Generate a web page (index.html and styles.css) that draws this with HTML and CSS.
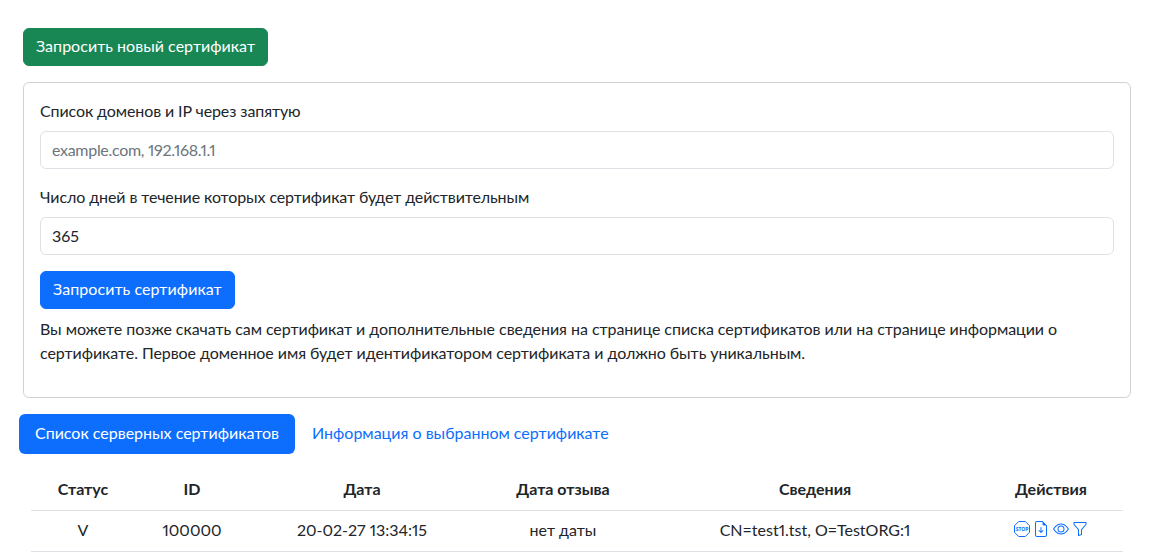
FILE: index.html
```html
<!DOCTYPE html>
<html lang="ru">
<head>
<meta charset="utf-8">
<title>Сертификаты</title>
<link rel="stylesheet" href="styles.css">
</head>
<body>
<main class="page">
  <section class="request">
    <button class="btn btn-green" type="button">Запросить новый сертификат</button>
    <form class="card">
      <label class="label" for="domains">Список доменов и IP через запятую</label>
      <input class="input" id="domains" type="text" placeholder="example.com, 192.168.1.1">
      <label class="label" for="days">Число дней в течение которых сертификат будет действительным</label>
      <input class="input" id="days" type="text" value="365">
      <button class="btn btn-blue" type="button">Запросить сертификат</button>
      <p class="hint">Вы можете позже скачать сам сертификат и дополнительные сведения на странице списка сертификатов или на странице информации о сертификате. Первое доменное имя будет идентификатором сертификата и должно быть уникальным.</p>
    </form>
  </section>
  <nav class="pills">
    <a class="pill active" href="#">Список серверных сертификатов</a>
    <a class="pill" href="#">Информация о выбранном сертификате</a>
  </nav>
  <table class="table">
    <colgroup>
      <col class="c1"><col class="c2"><col class="c3"><col class="c4"><col class="c5"><col class="c6">
    </colgroup>
    <thead>
      <tr><th>Статус</th><th>ID</th><th>Дата</th><th>Дата отзыва</th><th>Сведения</th><th>Действия</th></tr>
    </thead>
    <tbody>
      <tr>
        <td>V</td>
        <td>100000</td>
        <td>20-02-27 13:34:15</td>
        <td>нет даты</td>
        <td>CN=test1.tst, O=TestORG:1</td>
        <td>
          <span class="actions">
            <svg class="icon" viewBox="0 0 16 16" fill="currentColor"><path d="M4.7 0.5h6.6l4.2 4.2v6.6l-4.2 4.2H4.7L0.5 11.3V4.7z" fill="none" stroke="currentColor"/><text class="stop" x="8" y="9.9" text-anchor="middle">STOP</text></svg>
            <svg class="icon" viewBox="0 0 16 16" fill="currentColor"><path d="M8.5 6.5a.5.5 0 0 0-1 0v3.793L6.354 9.146a.5.5 0 1 0-.708.708l2 2a.5.5 0 0 0 .708 0l2-2a.5.5 0 0 0-.708-.708L8.5 10.293V6.5z"/><path d="M14 14V4.5L9.5 0H4a2 2 0 0 0-2 2v12a2 2 0 0 0 2 2h8a2 2 0 0 0 2-2zM9.5 3A1.5 1.5 0 0 0 11 4.5h2V14a1 1 0 0 1-1 1H4a1 1 0 0 1-1-1V2a1 1 0 0 1 1-1h5.5v2z"/></svg>
            <svg class="icon" viewBox="0 0 16 16" fill="currentColor"><path d="M16 8s-3-5.5-8-5.5S0 8 0 8s3 5.5 8 5.5S16 8 16 8zM1.173 8a13.133 13.133 0 0 1 1.66-2.043C4.12 4.668 5.88 3.5 8 3.5c2.12 0 3.879 1.168 5.168 2.457A13.133 13.133 0 0 1 14.828 8c-.058.087-.122.183-.195.288-.335.48-.83 1.12-1.465 1.755C11.879 11.332 10.119 12.5 8 12.5c-2.12 0-3.879-1.168-5.168-2.457A13.134 13.134 0 0 1 1.172 8z"/><path d="M8 5.5a2.5 2.5 0 1 0 0 5 2.5 2.5 0 0 0 0-5zM4.5 8a3.5 3.5 0 1 1 7 0 3.5 3.5 0 0 1-7 0z"/></svg>
            <svg class="icon" viewBox="0 0 16 16" fill="currentColor"><path d="M1.5 1.5A.5.5 0 0 1 2 1h12a.5.5 0 0 1 .5.5v2a.5.5 0 0 1-.128.334L10 8.692V13.5a.5.5 0 0 1-.342.474l-3 1A.5.5 0 0 1 6 14.5V8.692L1.628 3.834A.5.5 0 0 1 1.5 3.5v-2zm1 .5v1.308l4.372 4.858A.5.5 0 0 1 7 8.5v5.306l2-.666V8.5a.5.5 0 0 1 .128-.334L13.5 3.308V2h-11z"/></svg>
          </span>
        </td>
      </tr>
    </tbody>
  </table>
</main>
</body>
</html>
```
FILE: styles.css
```css
* { box-sizing: border-box; }
html, body { margin: 0; padding: 0; height: 100%; overflow: hidden; background: #fff; }
body {
  font-family: Lato, "Noto Sans", sans-serif;
  font-size: 16px;
  line-height: 24px;
  color: #212529;
  font-variant-numeric: proportional-nums;
}
.page { padding: 28px 19px 0; }
.request { margin: 0 0 16px 4px; }
.btn {
  display: block;
  height: 38px;
  padding: 0 12px 2px;
  border: 1px solid transparent;
  border-radius: 6px;
  font: inherit;
  letter-spacing: .07px;
  color: #fff;
  cursor: pointer;
}
.btn-green { background: #198754; border-color: #198754; margin-bottom: 16px; letter-spacing: .03px; }
.btn-blue { background: #0d6efd; border-color: #0d6efd; margin-bottom: 8px; }
.card {
  display: block;
  padding: 16px;
  border: 1px solid rgba(0, 0, 0, .176);
  border-radius: 6px;
}
.label { display: block; margin-bottom: 8px; letter-spacing: -.1px; }
.input {
  display: block;
  width: 100%;
  height: 38px;
  margin-bottom: 16px;
  padding: 0 11px 2px;
  border: 1px solid #dee2e6;
  border-radius: 6px;
  font: inherit;
  color: #212529;
  background: #fff;
}
.input::placeholder { color: #6c757d; opacity: 1; letter-spacing: -.3px; }
.hint { margin: 0 0 16px; letter-spacing: -.05px; }
.pills { display: flex; margin-bottom: 16px; }
.pill {
  display: block;
  height: 40px;
  padding: 7px 16px 9px;
  border-radius: 6px;
  color: #0d6efd;
  text-decoration: none;
}
.pill.active { background: #0d6efd; color: #fff; margin-right: 1px; }
.table {
  width: 1092px;
  margin-left: 12px;
  border-collapse: collapse;
  table-layout: fixed;
}
.c1 { width: 104px; }
.c2 { width: 114px; }
.c3 { width: 226px; }
.c4 { width: 176px; }
.c5 { width: 328px; }
.c6 { width: 144px; }
.table th, .table td {
  padding: 7px 8px 9px;
  text-align: center;
  border-bottom: 1px solid #dee2e6;
}
.table th { font-weight: 700; }
.actions { display: inline-flex; gap: 3.33px; margin-top: 3px; color: #0d6efd; vertical-align: top; }
.icon { display: block; width: 16px; height: 16px; }
.stop { font-family: "Noto Sans", sans-serif; font-size: 5px; font-weight: 700; fill: currentColor; }
```
